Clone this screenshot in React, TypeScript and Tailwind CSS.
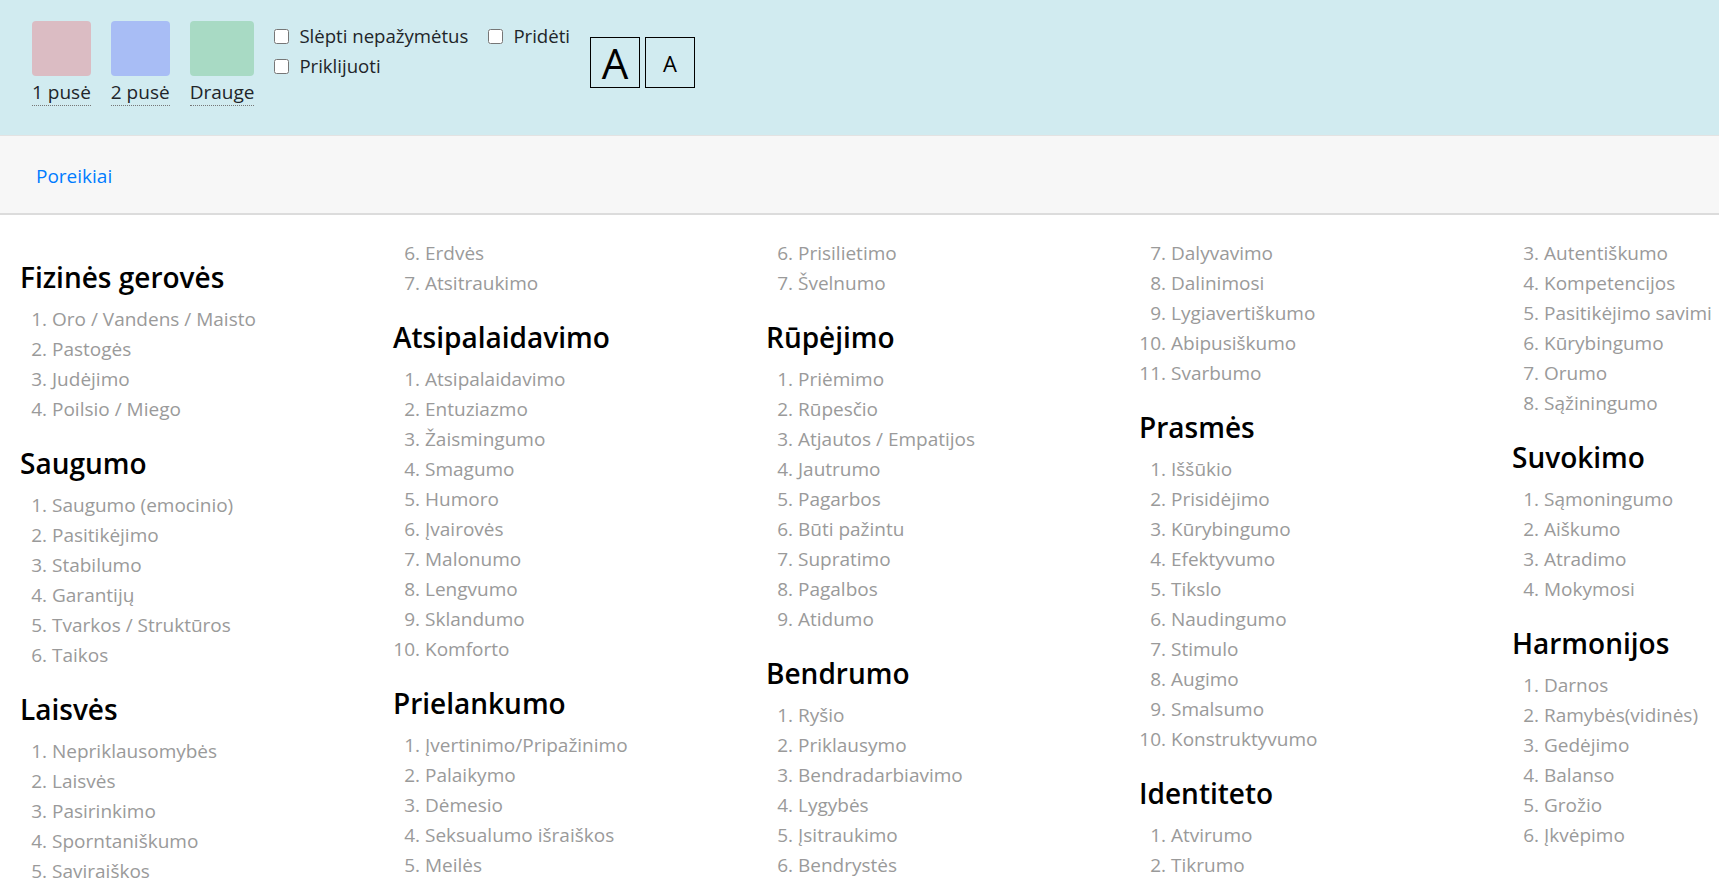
import React from "react";

type Sec = { title?: string; start?: number; items: string[] };

const columns: Sec[][] = [
  [
    { title: "Fizinės gerovės", items: ["Oro / Vandens / Maisto", "Pastogės", "Judėjimo", "Poilsio / Miego"] },
    { title: "Saugumo", items: ["Saugumo (emocinio)", "Pasitikėjimo", "Stabilumo", "Garantijų", "Tvarkos / Struktūros", "Taikos"] },
    { title: "Laisvės", items: ["Nepriklausomybės", "Laisvės", "Pasirinkimo", "Sporntaniškumo", "Saviraiškos"] },
  ],
  [
    { start: 6, items: ["Erdvės", "Atsitraukimo"] },
    {
      title: "Atsipalaidavimo",
      items: ["Atsipalaidavimo", "Entuziazmo", "Žaismingumo", "Smagumo", "Humoro", "Įvairovės", "Malonumo", "Lengvumo", "Sklandumo", "Komforto"],
    },
    { title: "Prielankumo", items: ["Įvertinimo/Pripažinimo", "Palaikymo", "Dėmesio", "Seksualumo išraiškos", "Meilės"] },
  ],
  [
    { start: 6, items: ["Prisilietimo", "Švelnumo"] },
    {
      title: "Rūpėjimo",
      items: ["Priėmimo", "Rūpesčio", "Atjautos / Empatijos", "Jautrumo", "Pagarbos", "Būti pažintu", "Supratimo", "Pagalbos", "Atidumo"],
    },
    { title: "Bendrumo", items: ["Ryšio", "Priklausymo", "Bendradarbiavimo", "Lygybės", "Įsitraukimo", "Bendrystės"] },
  ],
  [
    { start: 7, items: ["Dalyvavimo", "Dalinimosi", "Lygiavertiškumo", "Abipusiškumo", "Svarbumo"] },
    {
      title: "Prasmės",
      items: ["Iššūkio", "Prisidėjimo", "Kūrybingumo", "Efektyvumo", "Tikslo", "Naudingumo", "Stimulo", "Augimo", "Smalsumo", "Konstruktyvumo"],
    },
    { title: "Identiteto", items: ["Atvirumo", "Tikrumo"] },
  ],
  [
    { start: 3, items: ["Autentiškumo", "Kompetencijos", "Pasitikėjimo savimi", "Kūrybingumo", "Orumo", "Sąžiningumo"] },
    { title: "Suvokimo", items: ["Sąmoningumo", "Aiškumo", "Atradimo", "Mokymosi"] },
    { title: "Harmonijos", items: ["Darnos", "Ramybės(vidinės)", "Gedėjimo", "Balanso", "Grožio", "Įkvėpimo"] },
  ],
];

function Swatch({ color, label }: { color: string; label: string }) {
  return (
    <div className="flex flex-col">
      <div className={`h-[55px] rounded-[4px] ${color}`} />
      <span className="mt-[4px] text-[19px] leading-[25px] text-[#212529] border-b border-dotted border-[#777]">{label}</span>
    </div>
  );
}

function Check({ label }: { label: string }) {
  return (
    <label className="flex items-center h-[30px] gap-[10px] text-[18.6px] text-[#212529]">
      <input type="checkbox" className="w-[15px] h-[15px] m-0" />
      <span>{label}</span>
    </label>
  );
}

export default function App() {
  return (
    <div className="w-full h-screen overflow-hidden bg-white font-['Open_Sans',sans-serif]">
      <div className="bg-[#d1ebf0] h-[135px] pt-[21px] pl-[32px] flex items-start gap-[20px]">
        <Swatch color="bg-[#dbbcc3]" label="1 pusė" />
        <Swatch color="bg-[#a8bdf5]" label="2 pusė" />
        <Swatch color="bg-[#a8dac4]" label="Drauge" />
        <div className="flex flex-col">
          <Check label="Slėpti nepažymėtus" />
          <Check label="Priklijuoti" />
        </div>
        <div className="flex flex-col">
          <Check label="Pridėti" />
        </div>
        <div className="flex gap-[5px] mt-[16px]">
          <button className="w-[50px] h-[51px] border-[1.5px] border-black flex items-center justify-center text-[42px] leading-none text-black">A</button>
          <button className="w-[50px] h-[51px] border-[1.5px] border-black flex items-center justify-center text-[22px] leading-none text-black">A</button>
        </div>
      </div>
      <div className="bg-[#f7f7f7] h-[80px] border-t border-[#e3e3e3] border-b-2 border-b-[#dcdcdc] flex items-center pl-[36px] pt-[3px]">
        <a className="text-[#007bff] text-[19px]" href="#">
          Poreikiai
        </a>
      </div>
      <div className="pt-[23px] pl-[20px] flex w-[1886px]">
        {columns.map((col, ci) => (
          <div key={ci} className="w-[373px] shrink-0 flex flex-col">
            {col.map((s, si) => (
              <div key={si}>
                {s.title && (
                  <h4 className="mt-[22px] mb-[10px] text-[28px] leading-[34px] font-semibold text-black">{s.title}</h4>
                )}
                <ol start={s.start ?? 1} className="list-decimal list-outside pl-[32px] text-[#9a9a9a] text-[19px] leading-[30px]">
                  {s.items.map((it) => (
                    <li key={it}>{it}</li>
                  ))}
                </ol>
              </div>
            ))}
          </div>
        ))}
      </div>
    </div>
  );
}
